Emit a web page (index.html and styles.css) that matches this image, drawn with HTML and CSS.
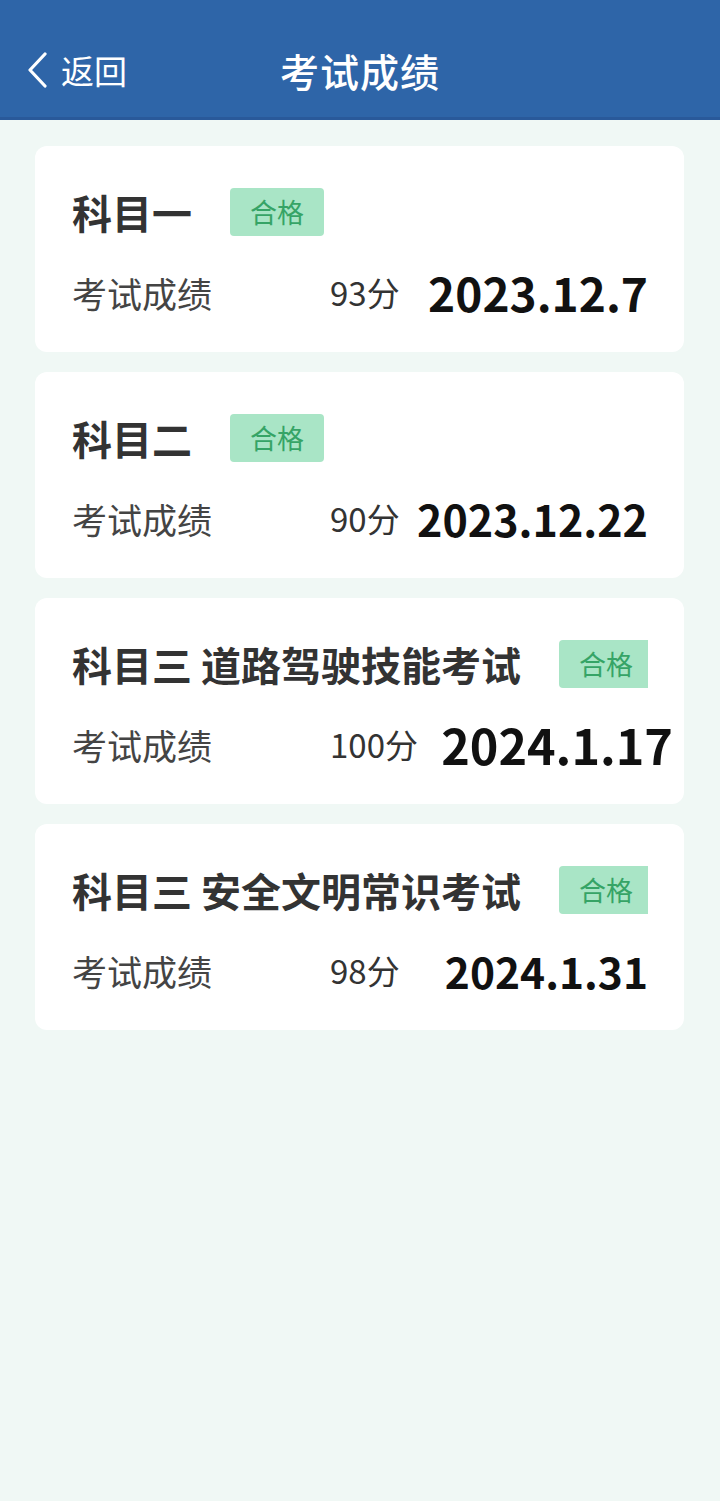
FILE: index.html
```html
<!DOCTYPE html>
<html lang="zh-CN">
<head>
    <meta charset="UTF-8">
    <meta name="viewport" content="width=device-width, initial-scale=1.0">
    <title>考试成绩</title>
    <link rel="stylesheet" href="styles.css">
</head>
<body>

    <header class = "topbar">
        <a class = "topbar__back" href="#">
            <svg class = "topbar__chevron" width="22" height="36" viewBox="0 0 22 36">
                <path d="M19 2 L4 18 L19 34" fill="none" stroke="#fff" stroke-width="3.2" stroke-linecap="round" stroke-linejoin="round"/>
            </svg>
            <span>返回</span>
        </a>
        <h1 class = "topbar__title">考试成绩</h1>
    </header>

    <section class = "list">
        <div class = "card">
            <div class = "card__head">
                <span class = "card__name">科目一</span>
                <span class = "badge">合格</span>
            </div>
            <div class = "card__row">
                <span class = "card__label">考试成绩</span>
                <span class = "card__score">93分</span>
                <span class = "card__date date--lg">2023.12.7</span>
            </div>
        </div>

        <div class = "card">
            <div class = "card__head">
                <span class = "card__name">科目二</span>
                <span class = "badge">合格</span>
            </div>
            <div class = "card__row">
                <span class = "card__label">考试成绩</span>
                <span class = "card__score">90分</span>
                <span class = "card__date">2023.12.22</span>
            </div>
        </div>

        <div class = "card">
            <div class = "card__head">
                <span class = "card__name">科目三 道路驾驶技能考试</span>
                <span class = "badge">合格</span>
            </div>
            <div class = "card__row">
                <span class = "card__label">考试成绩</span>
                <span class = "card__score">100分</span>
                <span class = "card__date date--xl">2024.1.17</span>
            </div>
        </div>

        <div class = "card">
            <div class = "card__head">
                <span class = "card__name">科目三 安全文明常识考试</span>
                <span class = "badge">合格</span>
            </div>
            <div class = "card__row">
                <span class = "card__label">考试成绩</span>
                <span class = "card__score">98分</span>
                <span class = "card__date date--sm">2024.1.31</span>
            </div>
        </div>
    </section>

</body>
</html>
```

FILE: styles.css
```css
*{
    box-sizing: border-box;
    padding: 0;margin: 0;
}
body{
    background: #f0f8f5;
    font-family: "Noto Sans CJK SC", "Noto Sans", sans-serif;
    min-height: 1501px;
}

.topbar{
    display: flex;
    align-items: center;
    justify-content: center;
    position: relative;
    height: 120px;
    padding-top: 22px;
    background: #2e65a8;
    border-bottom: 3px solid #29599a;
    color: #fff;
}
.topbar__back{
    position: absolute;
    left: 26px;
    top: 22px;
    bottom: 0;
    display: flex;
    align-items: center;
    gap: 13px;
    color: #fff;
    text-decoration: none;
    font-size: 33px;
}
.topbar__chevron{
    display: block;
}
.topbar__title{
    font-size: 39px;
    font-weight: 500;
    letter-spacing: 1px;
}

.list{
    display: flex;
    flex-direction: column;
    gap: 20px;
    padding: 26px 36px 0 35px;
}
.card{
    background: #fff;
    border-radius: 12px;
    height: 206px;
    padding: 34px 36px 0 37px;
}
/* badge gets cut at the right padding when the name is long */
.card__head{
    display: flex;
    align-items: center;
    gap: 38px;
    height: 64px;
    overflow: hidden;
    white-space: nowrap;
}
.card__name{
    font-size: 40px;
    line-height: 64px;
    font-weight: 700;
    color: #333;
    flex-shrink: 0;
}
.badge{
    flex-shrink: 0;
    width: 94px;
    height: 48px;
    line-height: 48px;
    text-align: center;
    font-size: 27px;
    color: #36a466;
    background: #a9e5c6;
    border-radius: 4px;
}
.card__row{
    display: flex;
    align-items: center;
    height: 54px;
    margin-top: 21px;
    white-space: nowrap;
}
.card__label{
    width: 258px;
    font-size: 35px;
    color: #444;
}
.card__score{
    font-size: 33px;
    color: #333;
}
.card__date{
    margin-left: auto;
    font-size: 43px;
    font-weight: 700;
    color: #111;
}
.date--lg{
    font-size: 46px;
}
.date--xl{
    font-size: 48.5px;
    margin-right: -25px;
}
.date--sm{
    font-size: 42.5px;
}
```
